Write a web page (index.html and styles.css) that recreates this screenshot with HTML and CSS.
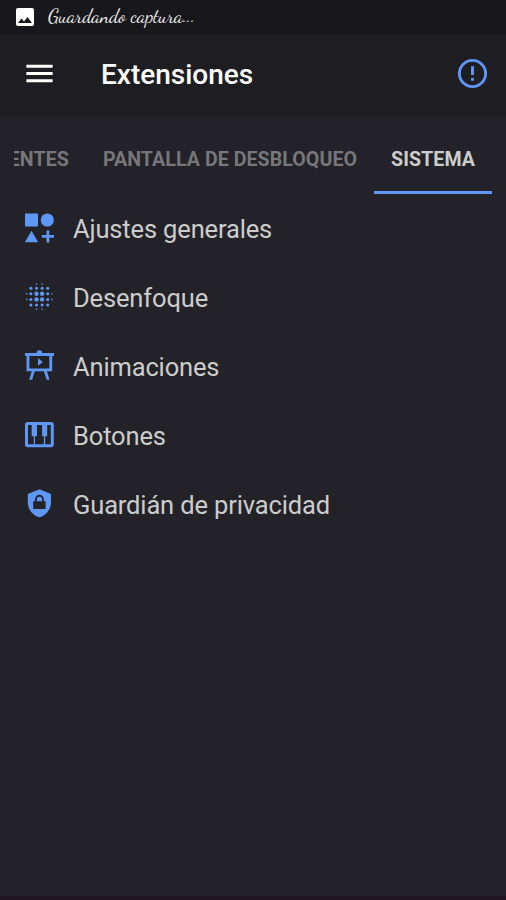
FILE: index.html
```html
<!DOCTYPE html>
<html lang="es">
<head>
<meta charset="utf-8">
<title>Extensiones</title>
<link rel="stylesheet" href="styles.css">
</head>
<body>
<div class="status">
  <svg class="status-icon" width="24" height="24" viewBox="0 0 24 24"><path d="M21 19V5a2 2 0 0 0-2-2H5a2 2 0 0 0-2 2v14a2 2 0 0 0 2 2h14a2 2 0 0 0 2-2zM8.5 13.5l2.500 3.010L14.500 12l4.500 6H5l3.500-4.500z"/></svg>
  <span class="status-text">Guardando captura...</span>
</div>
<header class="bar">
  <svg class="menu" width="35" height="35" viewBox="0 0 24 24"><path d="M3 6h18v2H3zM3 11h18v2H3zM3 16h18v2H3z"/></svg>
  <h1 class="title">Extensiones</h1>
  <svg class="alert" width="35" height="35" viewBox="0 0 24 24"><path d="M11 15h2v2h-2zM11 7h2v6h-2zM12 2a10 10 0 1 0 0 20 10 10 0 0 0 0-20zm0 18a8 8 0 1 1 0-16 8 8 0 0 1 0 16z"/></svg>
</header>
<nav class="tabs">
  <span class="tab">RECIENTES</span>
  <span class="tab">PANTALLA DE DESBLOQUEO</span>
  <span class="tab tab-active">SISTEMA</span>
</nav>
<main class="list">
  <div class="row">
    <svg class="icon" width="36" height="36" viewBox="0 0 36 36"><path d="M4 2.500h13v13H4zM10.500 19.700l6.700 11.500H3.800zM25.500 19.500h2.800v4.600H33v2.700h-4.700v4.600h-2.800v-4.600h-4.700v-2.700h4.700z"/><circle cx="26.300" cy="9" r="6.600"/></svg>
    <span class="label">Ajustes generales</span>
  </div>
  <div class="row">
    <svg class="icon" width="36" height="36" viewBox="0 0 36 36">
      <g><circle cx="15.500" cy="13.800" r="2.200"/><circle cx="21.100" cy="13.800" r="2.200"/><circle cx="15.500" cy="19.400" r="2.200"/><circle cx="21.100" cy="19.400" r="2.200"/></g>
      <g><circle cx="9.900" cy="8.200" r="1.500"/><circle cx="15.500" cy="8.200" r="1.500"/><circle cx="21.100" cy="8.200" r="1.500"/><circle cx="26.700" cy="8.200" r="1.500"/><circle cx="9.900" cy="13.800" r="1.500"/><circle cx="26.700" cy="13.800" r="1.500"/><circle cx="9.900" cy="19.400" r="1.500"/><circle cx="26.700" cy="19.400" r="1.500"/><circle cx="9.900" cy="25" r="1.500"/><circle cx="15.500" cy="25" r="1.500"/><circle cx="21.100" cy="25" r="1.500"/><circle cx="26.700" cy="25" r="1.500"/></g>
      <g><circle cx="15.500" cy="4" r=".8"/><circle cx="21.100" cy="4" r=".8"/><circle cx="15.500" cy="29.200" r=".8"/><circle cx="21.100" cy="29.200" r=".8"/><circle cx="5.700" cy="13.800" r=".8"/><circle cx="5.700" cy="19.400" r=".8"/><circle cx="30.900" cy="13.800" r=".8"/><circle cx="30.900" cy="19.400" r=".8"/></g>
    </svg>
    <span class="label">Desenfoque</span>
  </div>
  <div class="row">
    <svg class="icon" width="36" height="36" viewBox="0 0 36 36"><path fill-rule="evenodd" d="M4 4h11.500a2.850 2.850 0 0 1 5.700 0H33v2.900h-1.800v15.300h-5.300l2.700 8.600h-3l-2.700-8.600h-9.100l-2.700 8.600h-3l2.700-8.600H5.500V6.900H4zM8.400 6.900v12.500h19.900V6.900zM17 9.200l4.800 3.800-4.800 3.800z"/></svg>
    <span class="label">Animaciones</span>
  </div>
  <div class="row">
    <svg class="icon" width="36" height="36" viewBox="0 0 36 36"><path fill-rule="evenodd" d="M6.800 4h23.200a2.800 2.800 0 0 1 2.800 2.800v19.700a2.800 2.800 0 0 1-2.800 2.800H6.800A2.800 2.800 0 0 1 4 26.500V6.800A2.800 2.800 0 0 1 6.800 4zM7 7v19.300h5.800V18.300h-2.100V7zM16 7v11.300h-2v8h8.800v-8h-1.700V7zM26.200 7v11.300h-2v8h5.600V7z"/></svg>
    <span class="label">Botones</span>
  </div>
  <div class="row">
    <svg class="icon" width="36" height="36" viewBox="0 0 36 36"><path fill-rule="evenodd" d="M18.400 2.300L30 7v8.600c0 6.800-4.800 12.800-11.600 14.700C11.600 28.400 6.800 22.400 6.800 15.600V7zM14 14.300h-1.800v7.600h12.400v-7.600h-1.700v-2a4.450 4.450 0 0 0-8.900 0zM15.800 14.300v-2a2.650 2.650 0 0 1 5.300 0v2z"/></svg>
    <span class="label">Guardián de privacidad</span>
  </div>
</main>
<div class="edge"></div>
</body>
</html>
```
FILE: styles.css
```css
* { box-sizing: border-box; }
body {
  margin: 0;
  height: 900px;
  display: flex;
  flex-direction: column;
  overflow: hidden;
  background: #232228;
  color: #ccc;
  font-family: Roboto, "Liberation Sans", sans-serif;
}
svg { flex: none; display: block; }
.status {
  height: 34px;
  flex: none;
  display: flex;
  align-items: center;
  padding-left: 13px;
  background: #18181c;
}
.status-icon { fill: #fff; }
.status-text {
  margin: -3px 0 0 11px;
  color: #eee;
  font: 19.5px/24px "Dancing Script", cursive;
  white-space: nowrap;
}
.bar {
  height: 82px;
  flex: none;
  display: flex;
  align-items: center;
  padding: 0 16px 4px 22px;
  background: #1e1d22;
}
.menu { fill: #fff; }
.title {
  margin: 3px 0 0 44px;
  flex: 1;
  color: #fff;
  font-size: 28px;
  line-height: 36px;
  font-weight: 500;
}
.alert { fill: #5e97f6; }
.tabs {
  height: 78px;
  flex: none;
  display: flex;
  justify-content: flex-end;
  margin: 0 14px;
  overflow: hidden;
}
.tab {
  flex: none;
  padding: 0 17px;
  font-size: 19.6px;
  letter-spacing: .06px;
  line-height: 88px;
  font-weight: 700;
  color: #77777b;
  white-space: nowrap;
}
.tab-active {
  color: #ccc;
  border-bottom: 3px solid #5e97f6;
}
.list { flex: 1; }
.row {
  height: 69px;
  display: flex;
  align-items: center;
  padding-left: 21px;
}
.icon { fill: #5e97f6; }
.label {
  margin-left: 16px;
  font-size: 25.5px;
  letter-spacing: -.15px;
  line-height: 34px;
  white-space: nowrap;
}
.edge { height: 4px; flex: none; background: #21141f; }
```
